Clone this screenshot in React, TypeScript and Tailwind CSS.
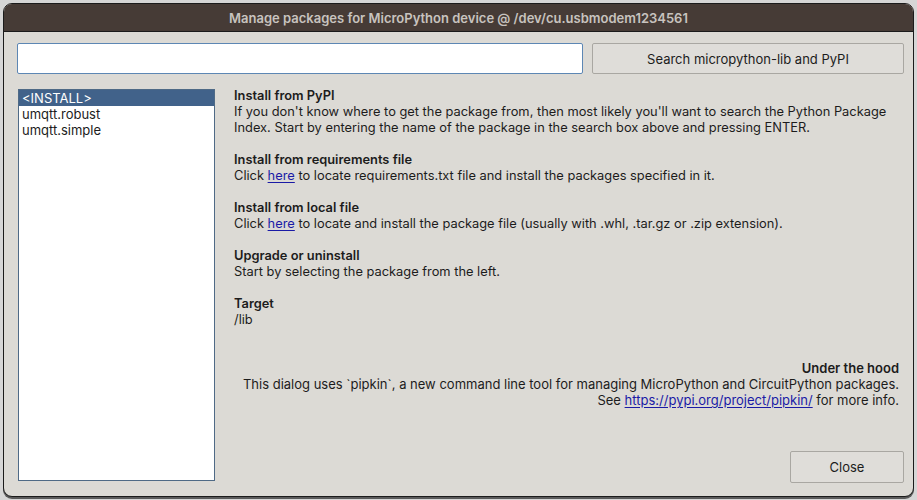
import { useState } from 'react';

const packages = ['<INSTALL>', 'umqtt.robust', 'umqtt.simple'];

interface SectionProps {
  title: string;
  children: React.ReactNode;
}

const Section = ({ title, children }: SectionProps) => (
  <div className="mb-4">
    <div className="font-semibold">{title}</div>
    <div>{children}</div>
  </div>
);

const Link = ({ children }: { children: React.ReactNode }) => (
  <a className="text-[#1a1aa6] underline underline-offset-2" href="#">
    {children}
  </a>
);

export default function App() {
  const [query, setQuery] = useState('');
  const [selected, setSelected] = useState(0);

  return (
    <div
      className="h-[500px] w-[917px] bg-[#d6d6d6] p-[3px] text-[13px] leading-4 text-[#1c1c1c]"
      style={{ fontFamily: 'Inter, "Liberation Sans", Arial, sans-serif' }}
    >
      <div className="flex h-[494px] w-[911px] flex-col overflow-hidden rounded-[9px] border border-[#1b1b1b] bg-[#dcdad5] shadow-[0_2px_0_#5a5a5a]">
        <div className="flex h-[28px] shrink-0 items-center justify-center border-b border-[#1b1b1b] bg-[#463b36] text-[13px] font-semibold text-[#c8c3bf]">
          Manage packages for MicroPython device @ /dev/cu.usbmodem1234561
        </div>

        <div className="flex flex-1 flex-col pl-[13px] pr-[9px] pt-[11px]">
          <div className="flex h-[31px] gap-[9px]">
            <input
              className="h-full w-[566px] rounded-[2px] border border-[#5d87b4] bg-white px-1 outline-none"
              value={query}
              onChange={(e) => setQuery(e.target.value)}
            />
            <button className="h-full flex-1 rounded-[2px] border border-[#a9a7a2] bg-[#dfddd9] text-[13px] text-[#1c1c1c]">
              Search micropython-lib and PyPI
            </button>
          </div>

          <div className="mt-[15px] flex">
            <div className="ml-[1px] flex h-[392px] w-[197px] shrink-0 flex-col border border-[#4f6a86] bg-white">
              {packages.map((name, index) => (
                <div
                  className={
                    index === selected
                      ? 'h-4 cursor-default bg-[#41628a] px-[3px] text-white'
                      : 'h-4 cursor-default px-[3px] text-[#1c1c1c]'
                  }
                  key={name}
                  onClick={() => setSelected(index)}
                >
                  {name}
                </div>
              ))}
            </div>

            <div className="flex flex-1 flex-col pl-[19px]">
              <div className="-mt-[1px] text-[12.85px]">
                <Section title="Install from PyPI">
                  If you don't know where to get the package from, then most likely you'll want to search the Python Package
                  <br />
                  Index. Start by entering the name of the package in the search box above and pressing ENTER.
                </Section>
                <Section title="Install from requirements file">
                  Click <Link>here</Link> to locate requirements.txt file and install the packages specified in it.
                </Section>
                <Section title="Install from local file">
                  Click <Link>here</Link> to locate and install the package file (usually with .whl, .tar.gz or .zip extension).
                </Section>
                <Section title="Upgrade or uninstall">Start by selecting the package from the left.</Section>
                <Section title="Target">/lib</Section>
              </div>

              <div className="mt-4 pr-[5px] text-right">
                <div className="font-semibold">Under the hood</div>
                <div>
                  This dialog uses `pipkin`, a new command line tool for managing MicroPython and CircuitPython packages.
                </div>
                <div>
                  See <Link>https://pypi.org/project/pipkin/</Link> for more info.
                </div>
              </div>

              <div className="mt-auto flex justify-end">
                <button className="-mb-[2px] h-[32px] w-[114px] rounded-[2px] border border-[#a9a7a2] bg-[#dfddd9] text-[13px] text-[#1c1c1c]">
                  Close
                </button>
              </div>
            </div>
          </div>
        </div>
      </div>
    </div>
  );
}
